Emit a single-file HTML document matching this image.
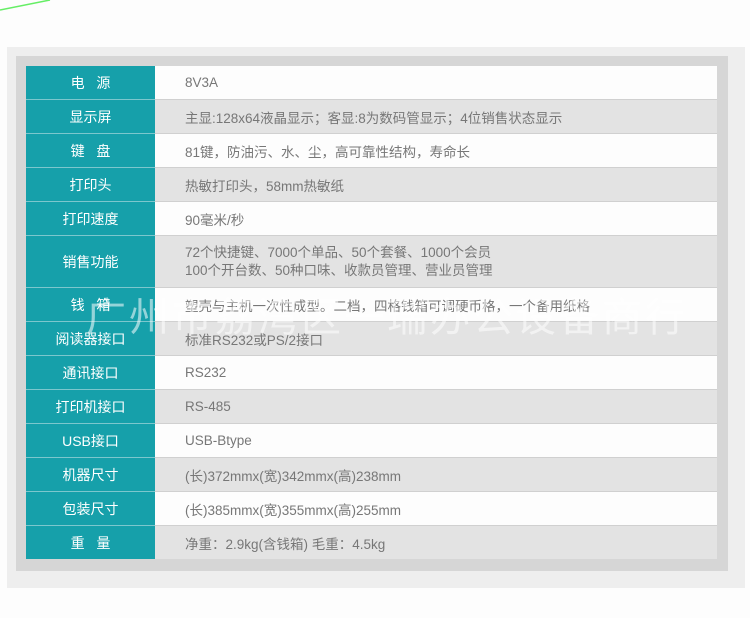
<!DOCTYPE html>
<html><head><meta charset="utf-8"><style>
body{margin:0;width:750px;height:618px;background:#fdfdfd;position:relative;overflow:hidden;font-family:"Liberation Sans","Noto Sans CJK SC",sans-serif}
.o{position:absolute;left:7px;top:47px;width:738px;height:541px;background:#eeeeee}
.i{position:absolute;left:16px;top:56px;width:712px;height:515px;background:#d6d6d6}
table{position:absolute;left:26px;top:66px;width:691px;border-collapse:collapse}
td{height:33px;padding:0;border-bottom:1px solid #d0d0d0;font-size:13.5px;color:#777}
td.k{width:129px;background:#16a0aa;color:#fff;text-align:center;font-size:14px;border-bottom:1px solid #7cc7cd}
td.v{padding-left:30px}
tr.g td.v{background:#e3e3e3}
tr.w td.v{background:#fdfdfd}
.wm{position:absolute;left:86px;top:285px;font-size:40px;color:rgba(255,255,255,.55);letter-spacing:3px;white-space:nowrap;font-family:"Noto Sans CJK SC",sans-serif}
</style></head><body>
<svg style="position:absolute;left:0;top:0" width="60" height="14"><line x1="0" y1="10" x2="50" y2="0" stroke="#66ee66" stroke-width="1.5"/></svg>
<div class="o"></div><div class="i"></div>
<table>
<tr class="w"><td class="k">电&nbsp;&nbsp;&nbsp;源</td><td class="v">8V3A</td></tr>
<tr class="g"><td class="k">显示屏</td><td class="v">主显:128x64液晶显示；客显:8为数码管显示；4位销售状态显示</td></tr>
<tr class="w"><td class="k">键&nbsp;&nbsp;&nbsp;盘</td><td class="v">81键，防油污、水、尘，高可靠性结构，寿命长</td></tr>
<tr class="g"><td class="k">打印头</td><td class="v">热敏打印头，58mm热敏纸</td></tr>
<tr class="w"><td class="k">打印速度</td><td class="v">90毫米/秒</td></tr>
<tr class="g"><td class="k" style="height:51px">销售功能</td><td class="v" style="line-height:18px">72个快捷键、7000个单品、50个套餐、1000个会员<br>100个开台数、50种口味、收款员管理、营业员管理</td></tr>
<tr class="w"><td class="k">钱&nbsp;&nbsp;&nbsp;箱</td><td class="v">塑壳与主机一次性成型。二档，四格钱箱可调硬币格，一个备用纸格</td></tr>
<tr class="g"><td class="k">阅读器接口</td><td class="v">标准RS232或PS/2接口</td></tr>
<tr class="w"><td class="k">通讯接口</td><td class="v">RS232</td></tr>
<tr class="g"><td class="k">打印机接口</td><td class="v">RS-485</td></tr>
<tr class="w"><td class="k">USB接口</td><td class="v">USB-Btype</td></tr>
<tr class="g"><td class="k">机器尺寸</td><td class="v">(长)372mmx(宽)342mmx(高)238mm</td></tr>
<tr class="w"><td class="k">包装尺寸</td><td class="v">(长)385mmx(宽)355mmx(高)255mm</td></tr>
<tr class="g"><td class="k" style="border-bottom:none">重&nbsp;&nbsp;&nbsp;量</td><td class="v" style="border-bottom:none">净重：2.9kg(含钱箱) 毛重：4.5kg</td></tr>
</table>
<div class="wm">广州市荔湾区一瑞办公设备商行</div>
</body></html>
